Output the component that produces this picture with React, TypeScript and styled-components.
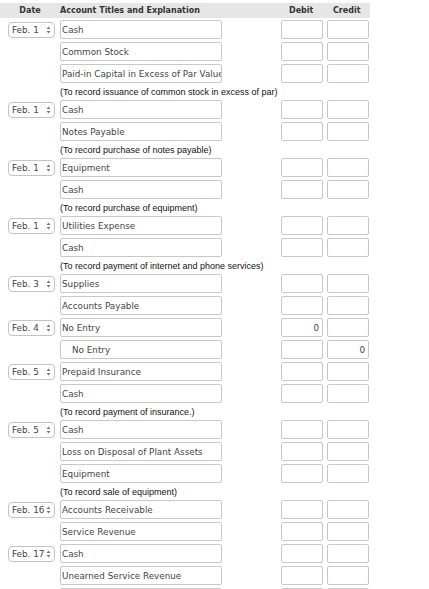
import React from "react";
import styled, { createGlobalStyle } from "styled-components";

const Global = createGlobalStyle`
  html, body { margin: 0; padding: 0; background: #fff; }
  body { font-family: "DejaVu Sans", Verdana, sans-serif; }
`;

const Page = styled.div`
  padding-top: 3px;
  width: 370px;
`;

const HeaderRow = styled.div`
  display: grid;
  grid-template-columns: 60px 162px 59px 46px 42px;
  height: 15px;
  align-items: center;
  background: #e6e6e6;
  font-family: "DejaVu Sans", Verdana, sans-serif;
  font-weight: bold;
  font-size: 8px;
  color: #333;
  margin-bottom: 2px;
`;

const HeadCell = styled.div<{ $align?: string; $pad?: number }>`
  text-align: ${(p) => p.$align || "left"};
  padding-left: ${(p) => p.$pad || 0}px;
  white-space: nowrap;
`;

const Row = styled.div`
  display: grid;
  grid-template-columns: 60px 162px 59px 46px 42px;
  height: 22px;
  align-items: start;
`;

const DateCell = styled.div`
  padding-left: 8px;
  padding-top: 2px;
`;

const DateSelect = styled.div`
  box-sizing: border-box;
  width: 47px;
  height: 16px;
  border: 1px solid #c4c4c4;
  border-radius: 4px;
  background: #fff;
  display: flex;
  align-items: center;
  justify-content: space-between;
  padding: 0 3px 0 3px;
  font-family: "DejaVu Sans", Verdana, sans-serif;
  font-size: 8.8px;
  color: #444;
`;

const Field = styled.div<{ $right?: boolean; $indent?: number }>`
  box-sizing: border-box;
  height: 19px;
  border: 1px solid #c8c8c8;
  border-radius: 2px;
  background: #fff;
  display: flex;
  align-items: center;
  justify-content: ${(p) => (p.$right ? "flex-end" : "flex-start")};
  padding: 0 ${(p) => (p.$right ? 3 : 1)}px 0 ${(p) => 1 + (p.$indent || 0)}px;
  font-family: "DejaVu Sans", Verdana, sans-serif;
  font-size: 8.8px;
  color: #454545;
  white-space: nowrap;
  overflow: hidden;
`;

const AmountField = styled(Field)`
  width: 42px;
`;

const Note = styled.div`
  height: 14px;
  padding-left: 60px;
  font-family: "Liberation Sans", Arial, sans-serif;
  font-size: 9px;
  line-height: 12px;
  color: #111;
  white-space: nowrap;
`;

const Arrows = () => (
  <svg width="5" height="8" viewBox="0 0 5 8">
    <path d="M2.5 0.5 L4.5 3 L0.5 3 Z" fill="#777" />
    <path d="M2.5 7.5 L4.5 5 L0.5 5 Z" fill="#777" />
  </svg>
);

type Line =
  | { kind: "row"; date?: string; account: string; debit?: string; credit?: string; indent?: number }
  | { kind: "note"; text: string };

const lines: Line[] = [
  { kind: "row", date: "Feb. 1", account: "Cash" },
  { kind: "row", account: "Common Stock" },
  { kind: "row", account: "Paid-in Capital in Excess of Par Value" },
  { kind: "note", text: "(To record issuance of common stock in excess of par)" },
  { kind: "row", date: "Feb. 1", account: "Cash" },
  { kind: "row", account: "Notes Payable" },
  { kind: "note", text: "(To record purchase of notes payable)" },
  { kind: "row", date: "Feb. 1", account: "Equipment" },
  { kind: "row", account: "Cash" },
  { kind: "note", text: "(To record purchase of equipment)" },
  { kind: "row", date: "Feb. 1", account: "Utilities Expense" },
  { kind: "row", account: "Cash" },
  { kind: "note", text: "(To record payment of internet and phone services)" },
  { kind: "row", date: "Feb. 3", account: "Supplies" },
  { kind: "row", account: "Accounts Payable" },
  { kind: "row", date: "Feb. 4", account: "No Entry", debit: "0" },
  { kind: "row", account: "No Entry", credit: "0", indent: 10 },
  { kind: "row", date: "Feb. 5", account: "Prepaid Insurance" },
  { kind: "row", account: "Cash" },
  { kind: "note", text: "(To record payment of insurance.)" },
  { kind: "row", date: "Feb. 5", account: "Cash" },
  { kind: "row", account: "Loss on Disposal of Plant Assets" },
  { kind: "row", account: "Equipment" },
  { kind: "note", text: "(To record sale of equipment)" },
  { kind: "row", date: "Feb. 16", account: "Accounts Receivable" },
  { kind: "row", account: "Service Revenue" },
  { kind: "row", date: "Feb. 17", account: "Cash" },
  { kind: "row", account: "Unearned Service Revenue" },
  { kind: "row", account: "" },
];

export default function App() {
  return (
    <Page>
      <Global />
      <HeaderRow>
        <HeadCell $align="center">Date</HeadCell>
        <HeadCell>Account Titles and Explanation</HeadCell>
        <HeadCell />
        <HeadCell $pad={8}>Debit</HeadCell>
        <HeadCell $pad={6}>Credit</HeadCell>
      </HeaderRow>
      {lines.map((l, i) =>
        l.kind === "note" ? (
          <Note key={i}>{l.text}</Note>
        ) : (
          <Row key={i}>
            <DateCell>
              {l.date && (
                <DateSelect>
                  <span>{l.date}</span>
                  <Arrows />
                </DateSelect>
              )}
            </DateCell>
            <Field $indent={l.indent}>{l.account}</Field>
            <div />
            <AmountField $right>{l.debit || ""}</AmountField>
            <AmountField $right>{l.credit || ""}</AmountField>
          </Row>
        )
      )}
    </Page>
  );
}
